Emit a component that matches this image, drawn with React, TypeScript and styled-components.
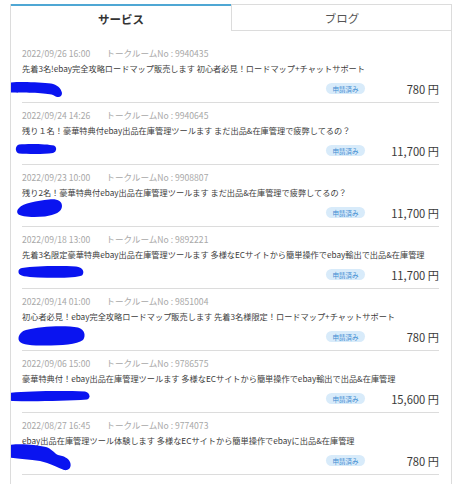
import React from "react";
import styled, { createGlobalStyle } from "styled-components";

const Global = createGlobalStyle`
  html, body { margin: 0; padding: 0; background: #fff; }
  body { font-family: "Noto Sans CJK JP", "Noto Sans", sans-serif; color: #333; }
`;

const Panel = styled.div`
  margin: 4px 0 0 10px;
  width: 442px;
  box-sizing: border-box;
  border-left: 1px solid #dcdcdc;
  border-right: 1px solid #dcdcdc;
  height: 480px;
  overflow: hidden;
`;

const Tabs = styled.div`
  display: grid;
  grid-template-columns: 220px 1fr;
  height: 27px;
`;

const Tab = styled.div<{ $active?: boolean }>`
  display: flex;
  align-items: center;
  justify-content: center;
  box-sizing: border-box;
  font-size: 11.5px;
  font-weight: ${(p) => (p.$active ? 700 : 400)};
  color: ${(p) => (p.$active ? "#333" : "#555")};
  border-top: ${(p) => (p.$active ? "2px solid #4fa7d4" : "1px solid #dcdcdc")};
  border-left: ${(p) => (p.$active ? "none" : "1px solid #dcdcdc")};
  border-bottom: ${(p) => (p.$active ? "none" : "1px solid #dcdcdc")};
  margin-right: ${(p) => (p.$active ? "0" : "-1px")};
`;

const List = styled.div`
  padding: 10px 12px 0 11px;
`;

const Row = styled.div`
  position: relative;
  padding: 6px 0 3px;
  border-bottom: 1px solid #dcdcdc;
`;

const Meta = styled.div`
  display: flex;
  gap: 16px;
  font-size: 8.6px;
  line-height: 13px;
  color: #a8a8a8;
`;

const Title = styled.div`
  font-size: 8.2px;
  line-height: 16px;
  color: #3c3c3c;
  white-space: nowrap;
`;

const Footer = styled.div`
  margin-top: 2px;
  height: 21px;
  display: flex;
  justify-content: flex-end;
  align-items: center;
  gap: 10px;
`;

const Badge = styled.span`
  display: inline-flex;
  align-items: center;
  justify-content: center;
  width: 39px;
  height: 11px;
  border-radius: 6px;
  background: #d8ebfa;
  color: #3f8cd2;
  font-size: 6.5px;
`;

const Price = styled.span`
  width: 64px;
  text-align: right;
  font-size: 11.2px;
  color: #3a3a3a;
`;

const Blob = styled.svg`
  position: absolute;
  overflow: visible;
`;

type Item = {
  date: string;
  room: string;
  title: string;
  price: string;
  blob: { left: number; top: number; w: number; h: number; d: string };
};

const items: Item[] = [
  {
    date: "2022/09/26 16:00",
    room: "9940435",
    title: "先着3名!ebay完全攻略ロードマップ販売します 初心者必見！ロードマップ+チャットサポート",
    price: "780",
    blob: {
      left: -18, top: 40.5, w: 58, h: 16,
      d: "M3,1 C12,-1 36,0 47,1.5 C53,2.5 57,6 58,11 C58,16 53,16 49,13 C42,10.5 22,11 8,10.5 C2,10 0,7 0.5,4.5 C1,2.5 2,1.5 3,1 Z",
    },
  },
  {
    date: "2022/09/24 14:26",
    room: "9940645",
    title: "残り１名！豪華特典付ebay出品在庫管理ツールます まだ出品&在庫管理で疲弊してるの？",
    price: "11,700",
    blob: {
      left: -7, top: 41, w: 42, h: 10,
      d: "M4,0.5 C14,-0.5 32,0 39,1.5 C42,3 42,7.5 38,9 C28,10.5 12,10 4,9.5 C0,8.5 -0.5,2 4,0.5 Z",
    },
  },
  {
    date: "2022/09/23 10:00",
    room: "9908807",
    title: "残り2名！豪華特典付ebay出品在庫管理ツールます まだ出品&在庫管理で疲弊してるの？",
    price: "11,700",
    blob: {
      left: -5, top: 34, w: 45, h: 18,
      d: "M2,9 C6,4 20,2 32,0.5 C40,-0.5 45,2 45,7 C45,13 38,16 28,17.5 C16,18.5 4,18 1,15 C-0.5,13 0,11 2,9 Z",
    },
  },
  {
    date: "2022/09/18 13:00",
    room: "9892221",
    title: "先着3名限定豪華特典ebay出品在庫管理ツールます 多様なECサイトから簡単操作でebay輸出で出品&在庫管理",
    price: "11,700",
    blob: {
      left: -4, top: 39, w: 66, h: 12,
      d: "M4,2 C18,0 40,-0.5 58,0.5 C65,1.5 67,6 64,9.5 C58,12 40,12 20,11.5 C8,11 1,10 0.5,6.5 C0,4 1.5,2.5 4,2 Z",
    },
  },
  {
    date: "2022/09/14 01:00",
    room: "9851004",
    title: "初心者必見！ebay完全攻略ロードマップ販売します 先着3名様限定！ロードマップ+チャットサポート",
    price: "780",
    blob: {
      left: -4, top: 37, w: 68, h: 20,
      d: "M8,4 C22,0 48,-1 60,1.5 C67,3.5 68,10 65,14 C58,19 38,20 18,19.5 C6,19 0,17 0.5,12 C1,8 4,5 8,4 Z",
    },
  },
  {
    date: "2022/09/06 15:00",
    room: "9786575",
    title: "豪華特典付！ebay出品在庫管理ツールます 多様なECサイトから簡単操作でebay輸出で出品&在庫管理",
    price: "15,600",
    blob: {
      left: -17, top: 40, w: 85, h: 10,
      d: "M3,2 C20,0.5 50,-0.5 80,0.5 C85,1.5 86,7 82,8.5 C60,10 30,10.5 8,10 C1,9.5 -0.5,5 3,2 Z",
    },
  },
  {
    date: "2022/08/27 16:45",
    room: "9774073",
    title: "ebay出品在庫管理ツール体験します 多様なECサイトから簡単操作でebayに出品&在庫管理",
    price: "780",
    blob: {
      left: -22, top: 31, w: 72, h: 27,
      d: "M4,2 C14,-1 34,0 46,3 C52,5 54,9 58,11 C64,12 68,14 70,18 C72,23 69,27 64,26 C58,24 50,19 40,17 C28,15 16,15 7,13 C1,12 -1,7 1,4.5 C2,3 3,2.5 4,2 Z",
    },
  },
];

export default function App() {
  return (
    <>
      <Global />
      <Panel>
        <Tabs>
          <Tab $active>サービス</Tab>
          <Tab>ブログ</Tab>
        </Tabs>
        <List>
          {items.map((it) => (
            <Row key={it.room}>
              <Meta>
                <span>{it.date}</span>
                <span>トークルームNo : {it.room}</span>
              </Meta>
              <Title>{it.title}</Title>
              <Footer>
                <Badge>申請済み</Badge>
                <Price>{it.price} 円</Price>
              </Footer>
              <Blob
                style={{ left: it.blob.left, top: it.blob.top }}
                width={it.blob.w}
                height={it.blob.h}
                viewBox={`0 0 ${it.blob.w} ${it.blob.h}`}
              >
                <path d={it.blob.d} fill="#0a14f0" />
              </Blob>
            </Row>
          ))}
        </List>
      </Panel>
    </>
  );
}
